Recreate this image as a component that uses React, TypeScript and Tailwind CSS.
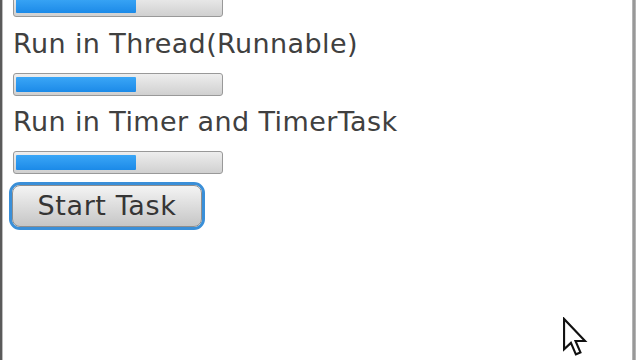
import React from "react";

function Bar() {
  return (
    <div className="w-[210px] h-[23px] rounded-[3px] border border-[#999999] bg-gradient-to-b from-[#eeeeee] to-[#d0d0d0] px-[2px] py-[3px] flex">
      <div className="w-[120px] h-full rounded-[1px] bg-gradient-to-b from-[#3aa6f6] to-[#1b8ae8]" />
    </div>
  );
}

export default function App() {
  return (
    <div
      className="w-[640px] h-[360px] bg-white flex overflow-hidden relative"
      style={{ fontFamily: '"DejaVu Sans", "Liberation Sans", sans-serif' }}
    >
      <div className="w-[3px] h-full bg-[#5a5a5a] border-r border-[#bdbdbd]" />
      <div className="flex-1 flex flex-col pl-[10px] mt-[-6px] text-[27px] leading-[32px] tracking-[0.4px] text-[#404040]">
        <Bar />
        <div className="mt-[11px] whitespace-nowrap">Run in Thread(Runnable)</div>
        <div className="mt-[13px]">
          <Bar />
        </div>
        <div className="mt-[10px] whitespace-nowrap">Run in Timer and TimerTask</div>
        <div className="mt-[13px]">
          <Bar />
        </div>
        <div className="mt-[8px] ml-[-4px] w-[196px] h-[48px] rounded-[11px] border-[3px] border-[#3a8fd8] flex">
          <button className="flex-1 rounded-[8px] border border-[#8e8e8e] bg-gradient-to-b from-[#f4f4f4] to-[#c6c6c6] text-[27px] leading-[32px] tracking-[0.6px] text-[#353535] flex items-center justify-center">
            Start Task
          </button>
        </div>
      </div>
      <div className="w-[4px] h-full bg-gradient-to-r from-[#c4c4c4] via-[#8a8a8a] to-[#c4c4c4]" />
      <div className="w-[4px] h-full bg-white" />
      <svg
        className="absolute left-[562px] top-[317px]"
        width="27"
        height="40"
        viewBox="0 0 14 21"
      >
        <path
          d="M1 1 L1 17 L4.6 13.6 L7.2 19.6 L9.6 18.6 L7 12.6 L12 12.6 Z"
          fill="white"
          stroke="#111"
          strokeWidth="1.1"
          strokeLinejoin="miter"
        />
      </svg>
    </div>
  );
}
